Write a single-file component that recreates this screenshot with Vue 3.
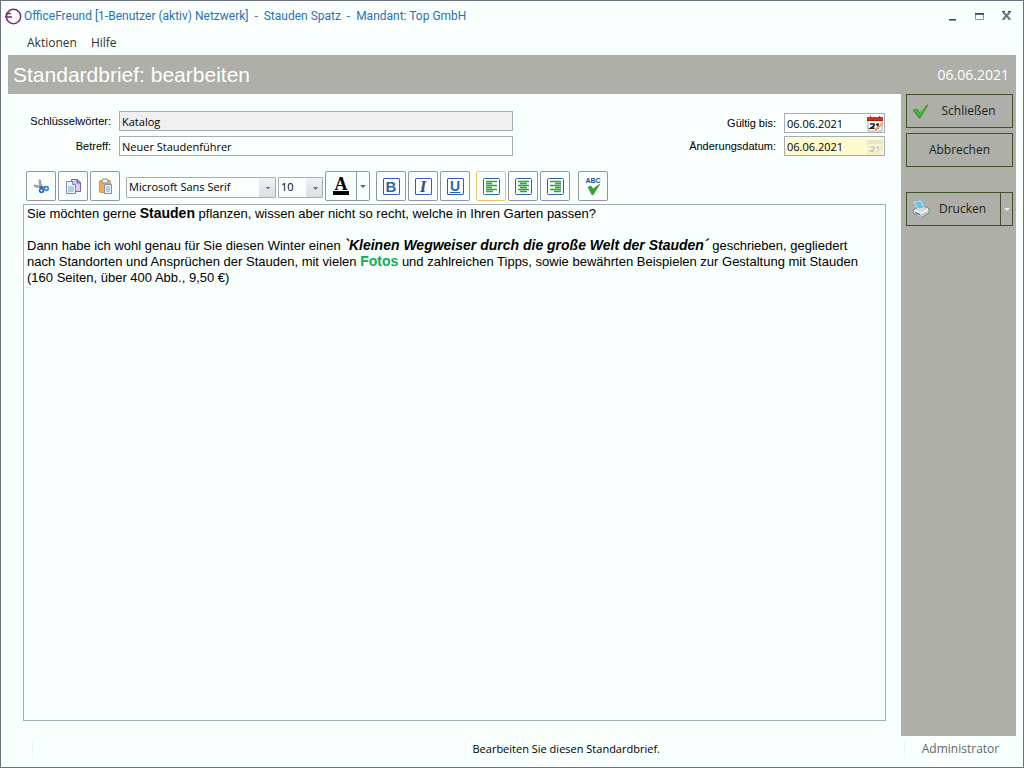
<script setup>
import { ref } from 'vue'

const keywords = ref('Katalog')
const subject = ref('Neuer Staudenführer')
const validUntil = ref('06.06.2021')
const changed = ref('06.06.2021')
const font = ref('Microsoft Sans Serif')
const size = ref('10')
const align = ref('links')
const alignments = [
  { id: 'links', label: 'Linksbündig', d: 'M3 3.5h11M3 5.5h6M3 7.5h11M3 9.5h6M3 11.5h11M3 13.5h7' },
  { id: 'mitte', label: 'Zentriert', d: 'M3 3.5h11M5 5.5h7M3 7.5h11M5 9.5h7M3 11.5h11M5 13.5h7' },
  { id: 'rechts', label: 'Rechtsbündig', d: 'M3 3.5h11M8 5.5h6M3 7.5h11M8 9.5h6M3 11.5h11M7 13.5h7' }
]
</script>

<template>
  <div class="window">
    <header class="titlebar">
      <svg class="logo" viewBox="0 0 17 17" aria-hidden="true">
        <circle cx="8.500" cy="8.500" r="7.200" fill="none" stroke="#7d2b72" stroke-width="1.500" />
        <path d="M0 9h7M1 5.500h5M1.500 5v4" fill="none" stroke="#7d2b72" stroke-width="1.400" />
      </svg>
      <span class="title">OfficeFreund [1-Benutzer (aktiv) Netzwerk]&nbsp; -&nbsp; Stauden Spatz&nbsp; -&nbsp; Mandant: Top GmbH</span>
      <div class="caption">
        <button type="button" aria-label="Minimieren">
          <svg viewBox="0 0 11 11"><path d="M2 8h7v1H2z" fill="#40434c" /><path d="M2 9h7v1H2z" fill="#8292ab" /></svg>
        </button>
        <button type="button" aria-label="Maximieren">
          <svg viewBox="0 0 11 11"><path d="M1.500 2.500h8v6h-8z" fill="none" stroke="#8292b1" /><path d="M1 2h9v2H1z" fill="#646c80" /><path d="M1 2h9v1H1z" fill="#40434c" /></svg>
        </button>
        <button type="button" aria-label="Schließen">
          <svg viewBox="0 0 11 11"><path d="M2 1l7 7.500M9 1l-7 7.500" stroke="#69758c" stroke-width="2" /><path d="M1 .5h3M7 .5h3" stroke="#40434c" /><path d="M1 8.500h3M7 8.500h3" stroke="#8292b1" /></svg>
        </button>
      </div>
    </header>

    <nav class="menu">
      <button type="button">Aktionen</button>
      <button type="button">Hilfe</button>
    </nav>

    <div class="banner">
      <h1>Standardbrief: bearbeiten</h1>
      <span>06.06.2021</span>
    </div>

    <div class="body">
      <main class="content">
        <form class="fields" @submit.prevent>
          <div class="pair left">
            <label for="keywords">Schlüsselwörter:</label>
            <input id="keywords" v-model="keywords" class="readonly" type="text" readonly />
            <label for="subject">Betreff:</label>
            <input id="subject" v-model="subject" type="text" />
          </div>
          <div class="pair right">
            <label for="valid">Gültig bis:</label>
            <div class="date">
              <input id="valid" v-model="validUntil" type="text" />
              <button type="button" aria-label="Datum wählen">
                <svg viewBox="0 0 18 17">
                  <path d="M2 4h14v12H2z" fill="#fff" stroke="#aaa6a6" />
                  <path d="M1 2h16v4H1z" fill="#d92c1e" /><path d="M1 5h16v1H1z" fill="#a81c14" />
                  <path d="M4.500 1v2M13.500 1v2" stroke="#8e302b" />
                  <path d="M4 9h4v1.800L4.500 13.300H8.500M10 10l2-1v5" fill="none" stroke="#262222" stroke-width="1.600" />
                  <path d="M9 15l1-2 6-6 1.500 1.500-6 6z" fill="#f2a955" /><path d="M9 15l.5-1.500 1 1z" fill="#593b28" />
                </svg>
              </button>
            </div>
            <label for="changed">Änderungsdatum:</label>
            <div class="date locked">
              <input id="changed" v-model="changed" type="text" readonly />
              <button type="button" aria-label="Datum gesperrt" disabled>
                <svg viewBox="0 0 18 17">
                  <path d="M2 4h14v12H2z" fill="#f9f6d3" stroke="#e8e5c4" />
                  <path d="M1 2h16v4H1z" fill="#e9e6c6" />
                  <path d="M4 9h4v1.800L4.500 13.300H8.500M10 10l2-1v5" fill="none" stroke="#cfccb2" stroke-width="1.600" />
                  <path d="M9 15l1-2 6-6 1.500 1.500-6 6z" fill="#e8e5c6" />
                </svg>
              </button>
            </div>
          </div>
        </form>

        <div class="toolbar" role="toolbar" aria-label="Formatierung">
          <div class="group">
            <button class="tool" type="button" aria-label="Ausschneiden">
              <svg viewBox="0 0 17 17">
                <path d="M1 7l8 1.500v1.500L2 9zM6 2h1.500l1 7-1.500 1z" fill="#b9bdc0" stroke="#777b80" stroke-width=".7" />
                <path d="M7 8.500l5 1M8 8l1 3" stroke="#2f6fbd" stroke-width="1.500" />
                <circle cx="8.500" cy="12.500" r="1.900" fill="#fff" stroke="#236bc1" stroke-width="1.600" />
                <circle cx="13.300" cy="10.500" r="1.900" fill="#fff" stroke="#347fd4" stroke-width="1.600" />
              </svg>
            </button>
            <button class="tool" type="button" aria-label="Kopieren">
              <svg viewBox="0 0 17 17">
                <path d="M6.500 1.500h6l3 3v9h-9z" fill="#d8cdec" stroke="#7964a4" /><path d="M12 1.500v3.500h3.500" fill="#9f8bc6" stroke="#7964a4" />
                <path d="M1.500 3.500h6l3 3v9h-9z" fill="#f2f6fb" stroke="#7189b2" /><path d="M7.500 3.500v3h3" fill="#d4dfed" stroke="#7189b2" />
                <path d="M3 8h6v6H3z" fill="#b9cbe3" />
              </svg>
            </button>
            <button class="tool" type="button" aria-label="Einfügen">
              <svg viewBox="0 0 17 17">
                <rect x="2.500" y="2.500" width="11" height="12" rx="1" fill="#f8ab48" stroke="#e18f32" />
                <path d="M5 2h1V1h4v1h1v3H5z" fill="#eceef0" stroke="#8b8e93" />
                <path d="M7.500 6.500h7v9h-7z" fill="#edf2fa" stroke="#8290ad" />
                <path d="M9 8h4v6H9z" fill="#bccae0" />
              </svg>
            </button>
          </div>
          <select v-model="font" class="font" aria-label="Schriftart">
            <option>Microsoft Sans Serif</option>
            <option>Arial</option>
          </select>
          <select v-model="size" class="size" aria-label="Schriftgröße">
            <option>10</option>
            <option>12</option>
          </select>
          <div class="split color">
            <button type="button" aria-label="Schriftfarbe"><span class="letter">A</span></button>
            <button type="button" aria-label="Farbe wählen"><i class="arrow"></i></button>
          </div>
          <div class="group">
            <button class="tool" type="button" aria-label="Fett"><span class="glyph bold">B</span></button>
            <button class="tool" type="button" aria-label="Kursiv"><span class="glyph italic">I</span></button>
            <button class="tool" type="button" aria-label="Unterstrichen"><span class="glyph under">U</span></button>
          </div>
          <div class="group">
            <button
              v-for="a in alignments"
              :key="a.id"
              class="tool"
              :class="{ active: align === a.id }"
              type="button"
              :aria-label="a.label"
              :aria-pressed="align === a.id"
              @click="align = a.id"
            >
              <svg viewBox="0 0 17 17">
                <rect x=".5" y=".5" width="16" height="16" rx="1" fill="#fff" stroke="#315fa8" />
                <path :d="a.d" stroke="#2aa832" stroke-width="1.500" />
              </svg>
            </button>
          </div>
          <button class="tool spell" type="button" aria-label="Rechtschreibung">
            <span>ABC</span>
            <svg viewBox="0 0 15 11"><path d="M2 3l3-1 2 3 7-5-7 11H6z" fill="#35a52d" stroke="#258420" stroke-width=".5" /></svg>
          </button>
        </div>

        <div class="editor" contenteditable="true" role="textbox" aria-multiline="true" aria-label="Brieftext" spellcheck="false">
          <p>Sie möchten gerne <b>Stauden</b> pflanzen, wissen aber nicht so recht, welche in Ihren Garten passen?</p>
          <p><br /></p>
          <p>Dann habe ich wohl genau für Sie diesen Winter einen <b><i>`Kleinen Wegweiser durch die große Welt der Stauden´</i></b> geschrieben, gegliedert nach Standorten und Ansprüchen der Stauden, mit vielen <b class="green">Fotos</b> und zahlreichen Tipps, sowie bewährten Beispielen zur Gestaltung mit Stauden (160 Seiten, über 400 Abb., 9,50 €)</p>
        </div>
      </main>

      <aside class="actions">
        <button class="action" type="button">
          <svg viewBox="0 0 18 18"><path d="M1 8l4-1 3 4 7-8h1L8 16H7z" fill="#38ad2c" stroke="#268020" stroke-width=".6" /><path d="M3 8l4.500 5L13 6" fill="none" stroke="#5cc646" /></svg>
          <span>Schließen</span>
        </button>
        <button class="action plain" type="button"><span>Abbrechen</span></button>
        <div class="print">
          <button class="action" type="button">
            <svg viewBox="0 0 18 18">
              <path d="M1 10l5-3 9 0 2 2v4l-7 4-8-3z" fill="#d5d7dd" stroke="#73757e" stroke-width=".8" />
              <path d="M2 2l7-1 3 7-6 1z" fill="#61c5ee" stroke="#d7f2fc" stroke-width=".7" />
              <path d="M2 10.500l7 2.500 7-3.500" fill="none" stroke="#f9f9fb" stroke-width="1.300" />
              <path d="M4 14l5 1.500 5-2.500v1.500l-5 2.500-5-2z" fill="#f4f5f8" stroke="#8e9097" stroke-width=".6" />
              <path d="M3 12.500l5 2" stroke="#50535b" />
            </svg>
            <span>Drucken</span>
          </button>
          <button class="more" type="button" aria-label="Druckoptionen"><i class="arrow"></i></button>
        </div>
      </aside>
    </div>

    <footer class="status">
      <span class="cell"></span>
      <span class="cell message">Bearbeiten Sie diesen Standardbrief.</span>
      <span class="cell user">Administrator</span>
    </footer>
  </div>
</template>

<style>
body { background: #f8fffd; }
</style>

<style scoped>
* { box-sizing: border-box; }
.window {
  min-height: 100vh;
  display: flex;
  flex-direction: column;
  border: 1px solid #6f717d;
  background: #f8fffd;
  color: #000;
  font: 12px/16px "Open Sans", "Noto Sans", sans-serif;
}
button, input, select { font: inherit; color: inherit; }
button { padding: 0; border: 0; background: none; }
svg { display: block; flex: none; }
.titlebar { display: flex; align-items: center; height: 30px; padding: 0 4px; color: #2d70b3; }
.logo { width: 17px; height: 17px; margin-right: 2px; }
.title { font-family: Roboto, "Open Sans", sans-serif; white-space: nowrap; }
.caption { display: flex; gap: 16px; margin-left: auto; padding-right: 7px; }
.caption svg { width: 11px; height: 11px; }
.menu { display: flex; gap: 14px; height: 24px; padding: 0 26px; color: #333; }
.banner {
  display: flex;
  align-items: center;
  justify-content: space-between;
  height: 39px;
  margin: 0 7px;
  padding: 0 7px 0 5px;
  background: #adafa8;
  color: #fff;
  font-size: 14px;
}
.banner h1 { margin: 0; font: 21px/24px "Liberation Sans", Arial, sans-serif; }
.body { flex: 1; display: flex; padding-right: 7px; }
.content { flex: 1; min-width: 0; display: flex; flex-direction: column; padding: 17px 15px 15px 22px; }
.fields { display: flex; justify-content: space-between; padding-right: 1px; }
.pair { display: grid; align-items: center; column-gap: 8px; }
.pair label { text-align: right; font: 11px/16px "Liberation Sans", Arial, sans-serif; white-space: nowrap; }
.pair input { font-size: 11px; }
.left { grid-template-columns: 88px minmax(0, 394px); row-gap: 5px; flex: 0 1 490px; }
.right { grid-template-columns: auto 101px; row-gap: 3px; padding-top: 2px; }
.pair input { width: 100%; height: 20px; padding: 0 2px; border: 1px solid #a5acb5; background: #fbfffe; outline: 0; }
.pair .readonly { background: #f0f0f0; }
.date { display: flex; height: 20px; border: 1px solid #a5acb5; background: #fbfffe; }
.date input { flex: 1; min-width: 0; height: 18px; border: 0; background: none; }
.date svg { width: 18px; height: 17px; }
.date.locked { background: #fffbd0; }
.toolbar { display: flex; align-items: center; margin: 15px 0 3px 3px; }
.group { display: flex; gap: 2px; margin-right: 6px; }
.tool {
  display: grid;
  place-items: center;
  width: 30px;
  height: 30px;
  border: 1px solid #9195a2;
  border-radius: 2px;
  background: #fafffe;
}
.tool svg { width: 17px; height: 17px; }
.active { border-color: #efc468; }
.toolbar select {
  appearance: none;
  height: 21px;
  margin-top: 2px;
  padding: 0 18px 0 2px;
  border: 1px solid #a5acb5;
  border-radius: 1px;
  background:
    linear-gradient(to bottom left, #787a84 50%, transparent 50%) right 7px top 9px / 3px 3px no-repeat,
    linear-gradient(to bottom right, #787a84 50%, transparent 50%) right 4px top 9px / 3px 3px no-repeat,
    linear-gradient(#f2f3f7, #dcdde6) right / 16px 100% no-repeat,
    #fbfffe;
  font-size: 11px;
}
.toolbar .font { width: 150px; margin-right: 2px; }
.toolbar .size { width: 45px; margin-right: 2px; }
.split { display: flex; height: 30px; border: 1px solid #9195a2; border-radius: 2px; }
.color { margin-right: 6px; }
.color button { display: grid; place-items: center; width: 30px; }
.color button + button { width: 13px; border-left: 1px solid #9195a2; }
.letter { width: 16px; border-bottom: 4px solid #000; font: bold 18px/14px "Liberation Serif", serif; }
.arrow { border: solid transparent; border-width: 3px 3px 0; border-top-color: #62656d; }
.glyph {
  width: 17px;
  height: 17px;
  border: 1px solid #315fa8;
  border-radius: 1px;
  background: #fff;
  color: #2468af;
  font: bold 15px/15px "Liberation Sans", Arial, sans-serif;
}
.italic { color: #354b7d; font: italic bold 17px/15px "Liberation Serif", serif; }
.under { font-size: 14px; text-decoration: underline; }
.spell { align-content: center; margin-left: 2px; color: #204d98; font: bold 7px/7px "Liberation Sans", Arial, sans-serif; }
.spell svg { width: 15px; height: 11px; }
.editor {
  flex: 1;
  padding: 1px 10px 1px 3px;
  border: 1px solid #a5acb5;
  outline: 0;
  font: 13px/16px "Liberation Sans", Arial, sans-serif;
}
.editor p { margin: 0; }
.editor b { font-size: 14px; line-height: 14px; }
.green { color: #10ae50; }
.actions { width: 115px; padding: 0 3px 0 5px; background: #adafa8; color: #222; }
.action { display: flex; align-items: center; width: 100%; height: 34px; padding: 0 5px; border: 1px solid #435028; }
.action svg { width: 18px; height: 18px; }
.action span { flex: 1; text-align: center; }
.plain { margin-top: 5px; }
.print { display: flex; margin-top: 25px; }
.print .action { flex: 1; }
.more { display: grid; place-items: center; width: 12px; border: 1px solid #435028; border-left: 0; }
.more .arrow { border-top-color: #eee; }
.status { display: flex; align-items: center; height: 31px; padding: 0 7px 4px 31px; }
.cell { flex: 1; height: 18px; border-left: 1px solid #f1f3f2; }
.status .message { padding-left: 7px; font-size: 11px; }
.status .user { flex: 0 0 112px; text-align: center; color: #666; }
</style>
